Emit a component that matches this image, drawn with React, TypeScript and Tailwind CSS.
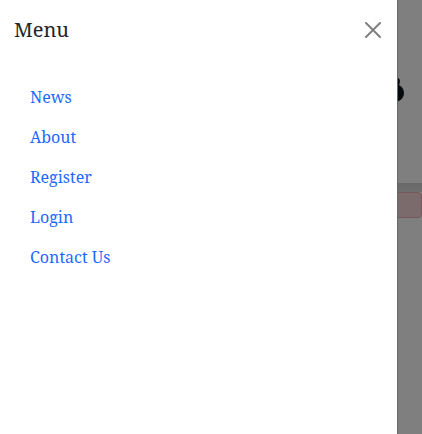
const links = ["News", "About", "Register", "Login", "Contact Us"];

function Page() {
  return (
    <div aria-hidden="true" className="min-h-screen bg-white">
      <header className="flex h-[183px] items-center justify-end px-[18px]">
        <svg width="24" height="28" viewBox="0 0 24 28" fill="none">
          <path d="M16 1C19 1 19 4 17 8" stroke="#0c1418" strokeWidth="3" />
          <ellipse cx="12" cy="15" rx="9" ry="7" stroke="#0c1418" strokeWidth="6" />
        </svg>
      </header>
      <div className="h-[9px] bg-gradient-to-b from-[#d2d2d2] to-[#dcdcdc]" />
      <div className="h-[26px] rounded border border-[#f1aeb5] bg-[#f8d7da]" />
    </div>
  );
}

export default function App() {
  return (
    <div className="font-['Noto_Serif','DejaVu_Serif',serif] text-base text-[#212529]">
      <Page />
      <div className="fixed inset-0 bg-black/50" />
      <aside
        role="dialog"
        aria-labelledby="menu-title"
        className="fixed inset-y-0 left-0 flex w-[398px] max-w-full flex-col border-r border-[#676869] bg-white"
      >
        <div className="flex items-center justify-between px-3.5 pt-4 pb-[17px]">
          <h5 id="menu-title" className="text-xl leading-7 font-normal">
            Menu
          </h5>
          <button type="button" aria-label="Close" className="p-0.5">
            <svg width="16" height="16" viewBox="0 0 16 16" fill="#808080">
              <path d="M.293.293a1 1 0 0 1 1.414 0L8 6.586 14.293.293a1 1 0 1 1 1.414 1.414L9.414 8l6.293 6.293a1 1 0 0 1-1.414 1.414L8 9.414l-6.293 6.293a1 1 0 0 1-1.414-1.414L6.586 8 .293 1.707a1 1 0 0 1 0-1.414" />
            </svg>
          </button>
        </div>
        <nav className="px-3.5 py-4">
          <ul>
            {links.map((label) => (
              <li key={label}>
                <a href="#" className="block px-4 py-2 leading-6 text-[#1f69ff]">
                  {label}
                </a>
              </li>
            ))}
          </ul>
        </nav>
      </aside>
    </div>
  );
}
